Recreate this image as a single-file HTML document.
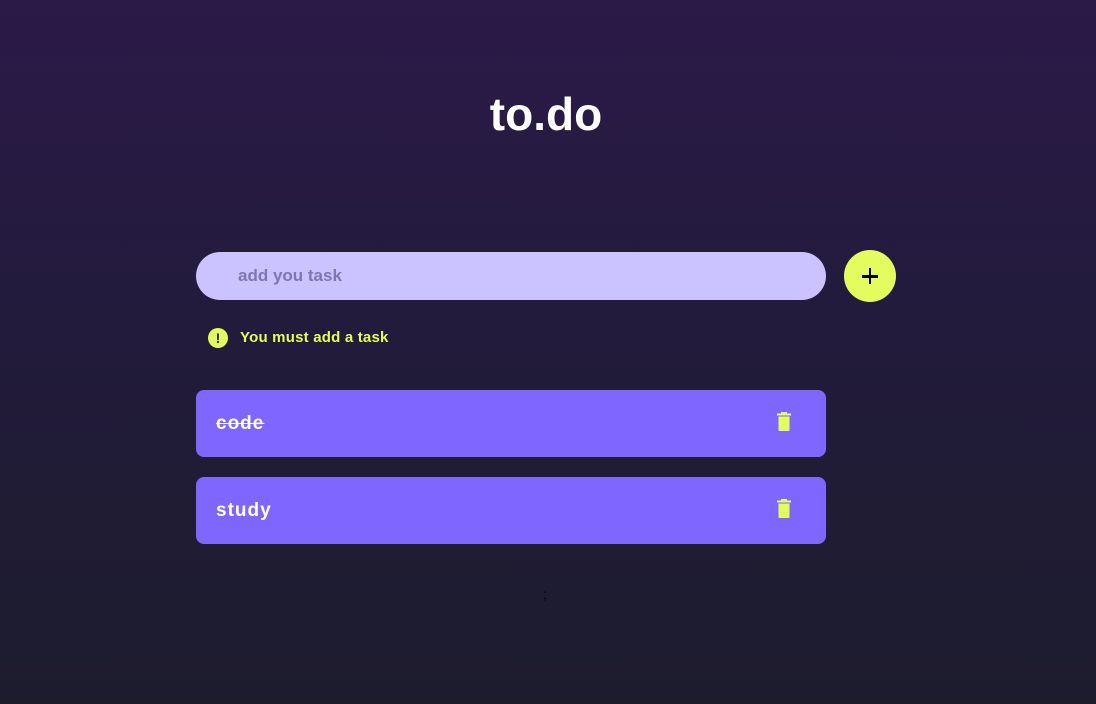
<!DOCTYPE html>
<html><head><meta charset="utf-8"><style>
*{margin:0;padding:0;box-sizing:border-box}
html,body{width:1096px;height:704px;overflow:hidden}
body{background:linear-gradient(180deg,#2b1948 0%,#221b3c 45%,#1d1c2d 100%);font-family:"Liberation Sans","DejaVu Sans",sans-serif;position:relative}
h1{position:absolute;top:86px;left:0;width:1092px;text-align:center;color:#fff;font-size:46px;font-weight:bold;letter-spacing:0;line-height:56px}
.inp{position:absolute;left:196px;top:252px;width:630px;height:48px;border-radius:24px;background:#cbc3ff;color:#7e76b0;font-size:17px;font-weight:bold;padding-left:42px;line-height:48px}
.btn{position:absolute;left:844px;top:250px;width:52px;height:52px;border-radius:50%;background:#e4fc5e}
.btn:before{content:"";position:absolute;left:18px;top:25px;width:16px;height:2.5px;background:#000}
.btn:after{content:"";position:absolute;left:24.7px;top:18px;width:2.5px;height:16px;background:#000}
.warn{position:absolute;left:208px;top:328px;color:#e4fc5e;font-size:15px;font-weight:bold;line-height:20px;letter-spacing:0.2px}
.warn i{display:inline-block;width:20px;height:20px;border-radius:50%;background:#e4fc5e;color:#221b3c;font-style:normal;text-align:center;font-size:14px;margin-right:12px;vertical-align:top}
.task{position:absolute;left:196px;width:630px;height:67px;border-radius:8px;background:#7e66ff;color:#fff;font-size:19px;font-weight:bold;letter-spacing:1px;padding-left:20px;line-height:67px}
.task svg{position:absolute;left:776px;top:22px}
.task svg{left:580px}
.dot{position:absolute;left:543px;top:586px;color:#000;font-size:14px}
</style></head><body>
<h1>to.do</h1>
<div class="inp">add you task</div>
<div class="btn"></div>
<div class="warn"><i>!</i>You must add a task</div>
<div class="task" style="top:390px"><s>code</s><svg width="16" height="20" viewBox="0 0 16 20"><rect x="1" y="1.5" width="14" height="2" fill="#e4fc5e"/><rect x="5" y="0" width="6" height="2" fill="#e4fc5e"/><path d="M2.5 4.5h11v13.5q0 1-1 1h-9q-1 0-1-1z" fill="#e4fc5e"/></svg></div>
<div class="task" style="top:477px">study<svg width="16" height="20" viewBox="0 0 16 20"><rect x="1" y="1.5" width="14" height="2" fill="#e4fc5e"/><rect x="5" y="0" width="6" height="2" fill="#e4fc5e"/><path d="M2.5 4.5h11v13.5q0 1-1 1h-9q-1 0-1-1z" fill="#e4fc5e"/></svg></div>
<div class="dot">;</div>
</body></html>
